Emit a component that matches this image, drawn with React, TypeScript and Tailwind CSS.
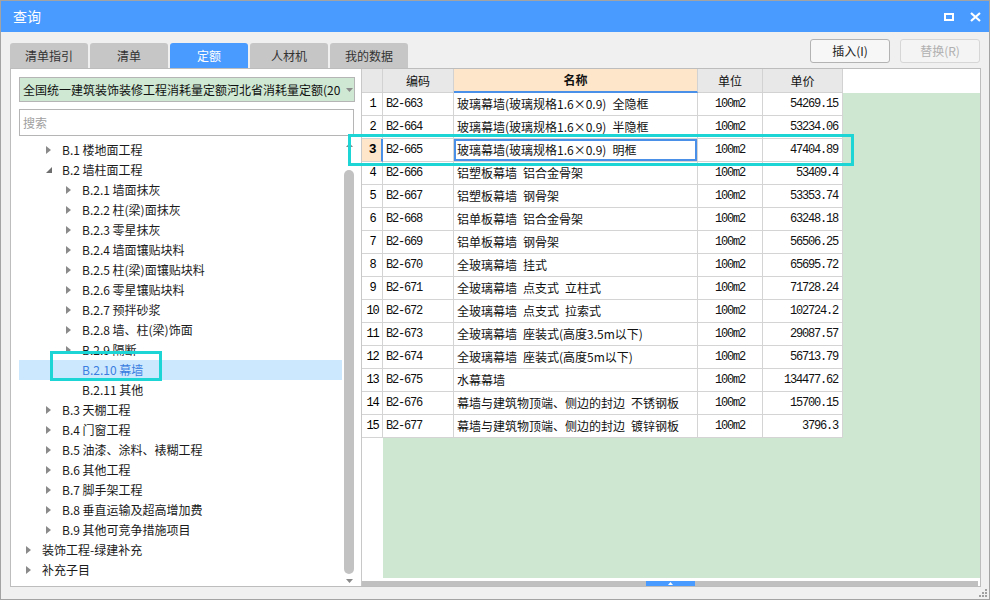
import React from "react";

const cjk = "font-['Noto_Sans_CJK_SC',sans-serif]";
const mono = "font-['Liberation_Mono','Noto_Sans_CJK_SC',monospace] text-[12px] tracking-[-1.2px]";

type TreeNode = { label: string; level: 0 | 1 | 2; state: "closed" | "open" | "leaf"; selected?: boolean };

const tree: TreeNode[] = [
  { label: "B.1 楼地面工程", level: 1, state: "closed" },
  { label: "B.2 墙柱面工程", level: 1, state: "open" },
  { label: "B.2.1 墙面抹灰", level: 2, state: "closed" },
  { label: "B.2.2 柱(梁)面抹灰", level: 2, state: "closed" },
  { label: "B.2.3 零星抹灰", level: 2, state: "closed" },
  { label: "B.2.4 墙面镶贴块料", level: 2, state: "closed" },
  { label: "B.2.5 柱(梁)面镶贴块料", level: 2, state: "closed" },
  { label: "B.2.6 零星镶贴块料", level: 2, state: "closed" },
  { label: "B.2.7 预拌砂浆", level: 2, state: "closed" },
  { label: "B.2.8 墙、柱(梁)饰面", level: 2, state: "closed" },
  { label: "B.2.9 隔断", level: 2, state: "closed" },
  { label: "B.2.10 幕墙", level: 2, state: "leaf", selected: true },
  { label: "B.2.11 其他", level: 2, state: "leaf" },
  { label: "B.3 天棚工程", level: 1, state: "closed" },
  { label: "B.4 门窗工程", level: 1, state: "closed" },
  { label: "B.5 油漆、涂料、裱糊工程", level: 1, state: "closed" },
  { label: "B.6 其他工程", level: 1, state: "closed" },
  { label: "B.7 脚手架工程", level: 1, state: "closed" },
  { label: "B.8 垂直运输及超高增加费", level: 1, state: "closed" },
  { label: "B.9 其他可竞争措施项目", level: 1, state: "closed" },
  { label: "装饰工程-绿建补充", level: 0, state: "closed" },
  { label: "补充子目", level: 0, state: "closed" },
];

const indent = { 0: "pl-[7px]", 1: "pl-[27px]", 2: "pl-[47px]" };

const rows = [
  ["B2-663", "玻璃幕墙(玻璃规格1.6×0.9) 全隐框", "54269.15"],
  ["B2-664", "玻璃幕墙(玻璃规格1.6×0.9) 半隐框", "53234.06"],
  ["B2-665", "玻璃幕墙(玻璃规格1.6×0.9) 明框", "47404.89"],
  ["B2-666", "铝塑板幕墙 铝合金骨架", "53409.4"],
  ["B2-667", "铝塑板幕墙 钢骨架", "53353.74"],
  ["B2-668", "铝单板幕墙 铝合金骨架", "63248.18"],
  ["B2-669", "铝单板幕墙 钢骨架", "56506.25"],
  ["B2-670", "全玻璃幕墙 挂式", "65695.72"],
  ["B2-671", "全玻璃幕墙 点支式 立柱式", "71728.24"],
  ["B2-672", "全玻璃幕墙 点支式 拉索式", "102724.2"],
  ["B2-673", "全玻璃幕墙 座装式(高度3.5m以下)", "29087.57"],
  ["B2-674", "全玻璃幕墙 座装式(高度5m以下)", "56713.79"],
  ["B2-675", "水幕幕墙", "134477.62"],
  ["B2-676", "幕墙与建筑物顶端、侧边的封边 不锈钢板", "15700.15"],
  ["B2-677", "幕墙与建筑物顶端、侧边的封边 镀锌钢板", "3796.3"],
];

function Arrow({ state }: { state: TreeNode["state"] }) {
  if (state === "leaf") return <span className="w-[16px] shrink-0" />;
  return (
    <span className="w-[16px] shrink-0 flex items-center">
      {state === "closed" ? (
        <svg width="5" height="8" viewBox="0 0 5 8">
          <polygon points="0,0 5,4 0,8" fill="#8a8a8a" />
        </svg>
      ) : (
        <svg width="6" height="6" viewBox="0 0 6 6">
          <polygon points="6,0 6,6 0,6" fill="#6e6e6e" />
        </svg>
      )}
    </span>
  );
}

const tabs = ["清单指引", "清单", "定额", "人材机", "我的数据"];

export default function App() {
  return (
    <div className={`relative w-[990px] h-[600px] border border-[#a3a3a3] bg-[#f0f0f0] flex flex-col overflow-hidden ${cjk}`}>
      <div className="h-[31px] shrink-0 bg-[#4a9bff] flex items-center pl-[12px] text-white text-[14px]">
        <span>查询</span>
        <div className="ml-auto flex items-center gap-[16px] mr-[8px]">
          <span className="w-[10px] h-[8px] border-2 border-white" />
          <svg width="11" height="10" viewBox="0 0 11 10">
            <path d="M1 1 L10 9 M10 1 L1 9" stroke="#fff" strokeWidth="2.2" />
          </svg>
        </div>
      </div>

      <div className="h-[36px] shrink-0 flex">
        <div className="ml-[9px] self-end flex gap-[2px]">
          {tabs.map((t) => (
            <div
              key={t}
              className={`w-[78px] h-[25px] rounded-t-[3px] flex items-center justify-center text-[12px] ${
                t === "定额" ? "bg-[#4a9bff] text-white" : "bg-[#c6c6c6] text-[#333]"
              }`}
            >
              {t}
            </div>
          ))}
        </div>
        <div className="ml-auto mr-[9px] mt-[7px] flex gap-[10px]">
          <button className="w-[80px] h-[24px] rounded-[3px] border border-[#b3b3b3] bg-[#f7f7f7] text-[12px] text-[#222]">
            插入(I)
          </button>
          <button className="w-[80px] h-[24px] rounded-[3px] border border-[#d6d6d6] bg-[#f4f4f4] text-[12px] text-[#b0b0b0]">
            替换(R)
          </button>
        </div>
      </div>

      <div className="ml-[9px] w-[971px] h-[519px] shrink-0 border border-[#bdbdbd] bg-white flex">
        {/* left pane */}
        <div className="w-[351px] border-r border-[#c8c8c8] flex flex-col pt-[8px] pl-[8px]">
          <div className="w-[336px] h-[25px] border border-[#b5b5b5] bg-[#cfe8d3] flex items-center pl-[3px] text-[12px] text-[#111]">
            <span className="w-[316px] whitespace-nowrap">全国统一建筑装饰装修工程消耗量定额河北省消耗量定额(20</span>
            <svg className="ml-[7px]" width="7" height="4" viewBox="0 0 7 4">
              <polygon points="0,0 7,0 3.5,4" fill="#8a8a8a" />
            </svg>
          </div>
          <div className="mt-[7px] w-[335px] h-[27px] border border-[#b5b5b5] flex items-center pl-[3px] text-[12px] text-[#a0a0a0]">
            搜索
          </div>
          <div className="mt-[4px] flex flex-1 min-h-0">
            <div className="w-[323px] flex flex-col">
              {tree.map((n) => (
                <div
                  key={n.label}
                  className={`h-[20px] shrink-0 flex items-center text-[12px] ${indent[n.level]} ${
                    n.selected ? "bg-[#cce8ff] text-[#3a7ee0]" : "text-[#1a1a1a]"
                  }`}
                >
                  <Arrow state={n.state} />
                  <span className="whitespace-nowrap">{n.label}</span>
                </div>
              ))}
            </div>
            <div className="w-[13px] flex flex-col items-center">
              <svg className="mt-[3px] ml-[2px]" width="7" height="4" viewBox="0 0 7 4">
                <polygon points="3.5,0 7,4 0,4" fill="#8a8a8a" />
              </svg>
              <div className="mt-[23px] ml-[1px] w-[10px] h-[404px] rounded-full bg-[#c2c2c2]" />
              <svg className="mt-[5px] ml-[2px]" width="7" height="4" viewBox="0 0 7 4">
                <polygon points="0,0 7,0 3.5,4" fill="#8a8a8a" />
              </svg>
            </div>
          </div>
        </div>

        {/* right pane */}
        <div className="w-[618px] flex flex-col">
          <div className="h-[24px] shrink-0 flex text-[12px] text-[#111]">
            <div className="w-[21px] border-r border-b border-[#d2d2d2] bg-[#e8e8e8]" />
            <div className="w-[71px] border-r border-b border-[#d2d2d2] bg-[#e8e8e8] flex items-center justify-center">编码</div>
            <div className="w-[244px] border-r border-[#d2d2d2] border-b-2 border-b-[#4a90e8] bg-[#fde6c9] flex items-center justify-center font-bold">
              名称
            </div>
            <div className="w-[65px] border-r border-b border-[#d2d2d2] bg-[#e8e8e8] flex items-center justify-center">单位</div>
            <div className="w-[80px] border-r border-b border-[#d2d2d2] bg-[#e8e8e8] flex items-center justify-center">单价</div>
            <div className="flex-1 bg-white" />
          </div>
          <div className="flex-1 flex min-h-0">
            <div className="w-[21px] bg-white flex flex-col">
              {rows.map((r, i) => (
                <div
                  key={r[0]}
                  className={`h-[23px] shrink-0 border-b border-[#d4d4d4] flex items-center justify-center pl-[1px] ${mono} ${
                    i === 2 ? "bg-[#fde6c9] font-bold border-r-2 border-r-[#4a90e8] text-[13px]" : "border-r"
                  }`}
                >
                  {i + 1}
                </div>
              ))}
            </div>
            <div className="flex-1 bg-[#cde7d1] flex flex-col">
              {rows.map((r, i) => (
                <div key={r[0]} className="h-[23px] shrink-0 flex text-[#111]">
                  <div className={`w-[71px] bg-white border-r border-b border-[#d4d4d4] flex items-center pl-[3px] ${mono}`}>{r[0]}</div>
                  <div className="relative w-[244px] bg-white border-r border-b border-[#d4d4d4] flex items-center pl-[3px] text-[12px] whitespace-pre">
                    {r[1].replace(/ /g, "\u2002")}
                    {i === 2 && <span className="absolute inset-0 border-2 border-[#4a90e8]" />}
                  </div>
                  <div className={`w-[65px] bg-white border-r border-b border-[#d4d4d4] flex items-center justify-center ${mono}`}>100m2</div>
                  <div className={`w-[80px] bg-white border-r border-b border-[#d4d4d4] flex items-center justify-end pr-[4px] ${mono}`}>{r[2]}</div>
                </div>
              ))}
            </div>
          </div>
          <div className="h-[8px] shrink-0 bg-white flex flex-col justify-end">
            <div className="h-[5px] w-[616px] bg-[#c0c0c0] flex">
              <div className="w-[284px]" />
              <div className="w-[49px] bg-[#4a9bff] flex items-center justify-center">
                <svg width="5" height="3" viewBox="0 0 5 3">
                  <polygon points="2.5,0 5,3 0,3" fill="#fff" />
                </svg>
              </div>
            </div>
          </div>
        </div>
      </div>

      {/* resize grip */}
      <svg className="absolute right-[1px] bottom-[1px]" width="10" height="10" viewBox="0 0 10 10">
        <rect x="7" y="1" width="2" height="2" fill="#a0a0a0" />
        <rect x="4" y="4" width="2" height="2" fill="#a0a0a0" />
        <rect x="7" y="4" width="2" height="2" fill="#a0a0a0" />
        <rect x="1" y="7" width="2" height="2" fill="#a0a0a0" />
        <rect x="4" y="7" width="2" height="2" fill="#a0a0a0" />
        <rect x="7" y="7" width="2" height="2" fill="#a0a0a0" />
      </svg>

      {/* annotation frames */}
      <div className="absolute left-[49px] top-[350px] w-[112px] h-[30px] border-[3px] border-[#1dd5d5]" />
      <div className="absolute left-[347px] top-[133px] w-[506px] h-[32px] border-[3px] border-[#1dd5d5]" />
    </div>
  );
}
